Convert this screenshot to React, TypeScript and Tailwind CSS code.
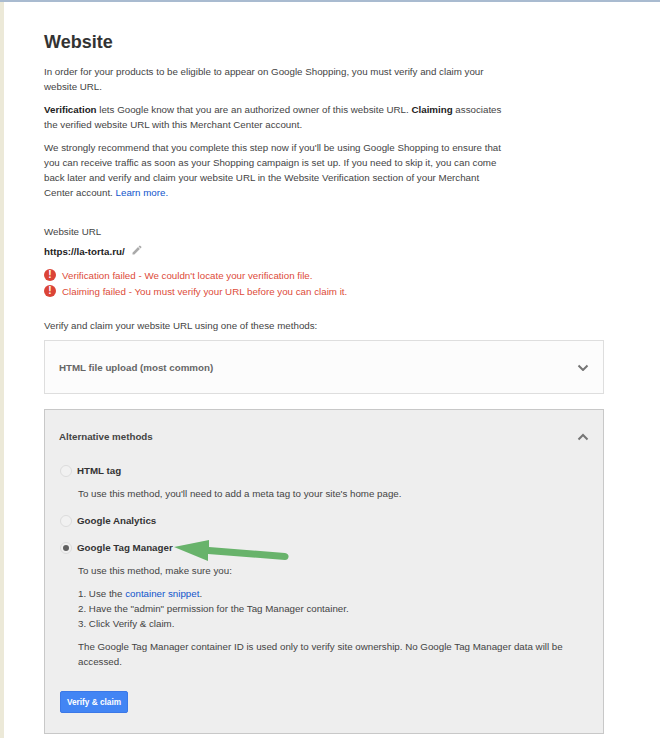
const font = "font-['Liberation_Sans',Arial,sans-serif]";

function Chevron({ up }: { up?: boolean }) {
  return (
    <svg width="12" height="8" viewBox="0 0 12 8" fill="none">
      <path
        d={up ? "M1.5 6.5 L6 2 L10.5 6.5" : "M1.5 2.5 L6 7 L10.5 2.5"}
        stroke="#757575"
        strokeWidth="2"
      />
    </svg>
  );
}

function ErrorLine({ children }: { children: React.ReactNode }) {
  return (
    <div className="flex h-[16px] items-center gap-[6px] text-[#dd4b39]">
      <span className="flex h-[12px] w-[12px] items-center justify-center rounded-full bg-[#db4437] text-[10px] leading-none font-bold text-white">
        !
      </span>
      <span>{children}</span>
    </div>
  );
}

function Radio({ checked }: { checked?: boolean }) {
  return (
    <span className="ml-[1px] flex h-[12px] w-[12px] shrink-0 items-center justify-center rounded-full border border-[#dcdcdc] bg-[#f1f1f1]">
      {checked && <span className="h-[6px] w-[6px] rounded-full bg-[#616161]" />}
    </span>
  );
}

export default function App() {
  return (
    <div className={`${font} relative h-[738px] w-[660px] overflow-hidden bg-white text-[9.75px] leading-[15px] text-[#444]`}>
      <div className="h-[2px] bg-[#a9bbd0]" />
      <div className="flex h-[736px]">
        <div className="w-[4px] shrink-0 bg-[#ece9d8]" />
        <div className="w-[656px] pl-[40px]">
          <h1 className="mt-[29px] text-[18px] leading-[22px] font-bold text-[#333]">Website</h1>

          <p className="mt-[11px] w-[460px]">
            In order for your products to be eligible to appear on Google Shopping, you must verify and claim your website URL.
          </p>
          <p className="mt-[8px] w-[460px]">
            <b className="text-[#222]">Verification</b> lets Google know that you are an authorized owner of this website URL. <b className="text-[#222]">Claiming</b> associates the verified website URL with this Merchant Center account.
          </p>
          <p className="mt-[8px] w-[460px]">
            We strongly recommend that you complete this step now if you'll be using Google Shopping to ensure that you can receive traffic as soon as your Shopping campaign is set up. If you need to skip it, you can come back later and verify and claim your website URL in the Website Verification section of your Merchant Center account. <span className="text-[#1155cc]">Learn more.</span>
          </p>

          <div className="mt-[24px]">Website URL</div>
          <div className="mt-[5px] flex items-center gap-[6px]">
            <b className="text-[#222]">https://la-torta.ru/</b>
            <svg width="12" height="12" viewBox="0 0 24 24" fill="#aaa" className="-mt-[3px]">
              <path d="M3 17.25V21h3.75L17.81 9.94l-3.75-3.75L3 17.25zM20.71 7.04a1 1 0 0 0 0-1.41l-2.34-2.34a1 1 0 0 0-1.41 0l-1.83 1.83 3.75 3.75 1.83-1.83z" />
            </svg>
          </div>
          <div className="mt-[8px]">
            <ErrorLine>Verification failed - We couldn't locate your verification file.</ErrorLine>
            <ErrorLine>Claiming failed - You must verify your URL before you can claim it.</ErrorLine>
          </div>

          <div className="mt-[19px]">Verify and claim your website URL using one of these methods:</div>

          <div className="mt-[7px] flex h-[54px] w-[560px] items-center justify-between border border-[#dedede] bg-[#fcfcfc] pr-[14px] pl-[14px]">
            <b className="text-[#666]">HTML file upload (most common)</b>
            <Chevron />
          </div>

          <div className="mt-[15px] h-[325px] w-[560px] border border-[#c8c8c8] bg-[#eeeeee] pr-[14px] pl-[14px]">
            <div className="mt-[19px] flex items-center justify-between">
              <b className="text-[#444]">Alternative methods</b>
              <Chevron up />
            </div>
            <div className="mt-[19px] flex items-center gap-[5px]">
              <Radio />
              <b className="text-[#333]">HTML tag</b>
            </div>
            <div className="mt-[8px] ml-[19px]">To use this method, you'll need to add a meta tag to your site's home page.</div>
            <div className="mt-[12px] flex items-center gap-[5px]">
              <Radio />
              <b className="text-[#333]">Google Analytics</b>
            </div>
            <div className="mt-[12px] flex items-center gap-[5px]">
              <Radio checked />
              <b className="text-[#333]">Google Tag Manager</b>
            </div>
            <div className="mt-[8px] ml-[19px]">
              <div>To use this method, make sure you:</div>
              <div className="mt-[8px]">1. Use the <span className="text-[#1155cc]">container snippet</span>.</div>
              <div>2. Have the "admin" permission for the Tag Manager container.</div>
              <div>3. Click Verify &amp; claim.</div>
              <p className="mt-[8px] w-[490px]">
                The Google Tag Manager container ID is used only to verify site ownership. No Google Tag Manager data will be accessed.
              </p>
            </div>
            <button className="mt-[22px] ml-[1px] h-[22px] w-[68px] rounded-[2px] border border-[#3b78e7] bg-[#4285f4] text-[8.25px] font-bold text-white">
              Verify &amp; claim
            </button>
          </div>
        </div>
      </div>
      {/* annotation arrow drawn over the screenshot */}
      <svg width="120" height="30" viewBox="172 535 120 30" className="absolute top-[535px] left-[172px]">
        <path d="M174 547 L209 540 L209 547 L285 553 Q289 554 288.5 557 Q288 560 285 560 L208 554 L208 561 Z" fill="#68b36b" />
      </svg>
    </div>
  );
}
